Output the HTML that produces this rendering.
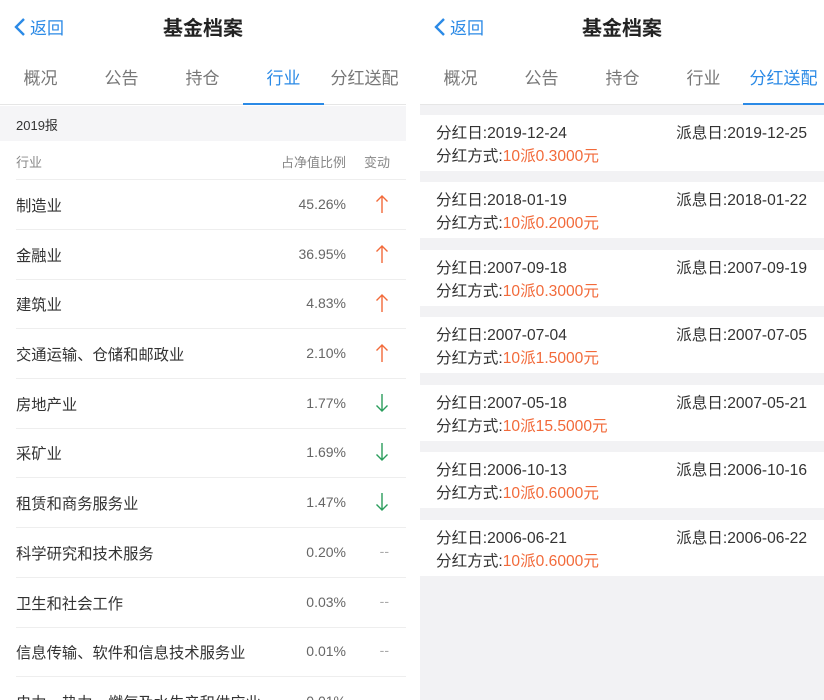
<!DOCTYPE html><html><head><meta charset="utf-8"><style>
*{margin:0;padding:0;box-sizing:border-box}
body{width:824px;height:700px;overflow:hidden;background:#fff;font-family:"Liberation Sans","Noto Sans CJK SC",sans-serif;position:relative}
.p{position:absolute;top:0;height:700px;overflow:hidden}
.L{left:0;width:406px}
.R{left:420px;width:404px;background:#f2f2f4}
.hd{position:absolute;top:0;left:0;right:0;height:50px;background:#fff}
.back{position:absolute;left:14px;top:14px;color:#2b8ae6;font-size:17px;display:flex;align-items:center}
.back svg{margin-right:4px}
.title{position:absolute;left:0;right:0;top:12px;text-align:center;font-size:20px;font-weight:bold;color:#222}
.tabs{position:absolute;top:50px;left:0;right:0;height:55px;background:#fff;border-bottom:1px solid #e6e6e6}
.tab{position:absolute;top:14px;font-size:17px;color:#777;width:81px;text-align:center}
.tab.on{color:#2b8ae6}
.ul{position:absolute;bottom:-1px;height:2px;background:#2b8ae6;width:81px}
.row{position:absolute;left:16px;right:0;height:50px;border-bottom:1px solid #eee;font-size:15.3px;color:#333}
.row .n{position:absolute;left:0;top:14px}
.row .v{position:absolute;right:60px;top:16px;font-size:14px;color:#666}
.row .a{position:absolute;right:17px;top:14px}
.dd{position:absolute;right:17px;top:15px;color:#aaa;font-size:14px}
.card{position:absolute;left:0;right:0;height:56px;background:#fff;font-size:15.6px;color:#333}
.card .a1{position:absolute;left:16px;top:6px}
.card .a2{position:absolute;right:17px;top:6px}
.card .a3{position:absolute;left:16px;top:29px}
.o{color:#f26a3a}
</style></head><body>
<svg width="0" height="0" style="position:absolute"><defs>
<symbol id="u" viewBox="0 0 14 20"><path d="M7 19V2M1.5 7.5L7 2l5.5 5.5" fill="none" stroke="#f26a3a" stroke-width="1.4"/></symbol>
<symbol id="d" viewBox="0 0 14 20"><path d="M7 1v17M1.5 12.5L7 18l5.5-5.5" fill="none" stroke="#2a9d5c" stroke-width="1.4"/></symbol>
</defs></svg>
<div class="p L">
<div class="hd"><div class="back"><svg width="12" height="20" viewBox="0 0 12 20"><path d="M10 2L2 10l8 8" fill="none" stroke="#2b8ae6" stroke-width="2.4"/></svg>返回</div><div class="title">基金档案</div></div>
<div class="tabs"><div class="tab" style="left:0">概况</div><div class="tab" style="left:81px">公告</div><div class="tab" style="left:162px">持仓</div><div class="tab on" style="left:243px">行业</div><div class="tab" style="left:324px">分红送配</div><div class="ul" style="left:243px"></div></div>
<div style="position:absolute;top:106px;left:0;right:0;height:35px;background:#f5f5f7;font-size:13px;color:#333;padding:9px 16px">2019报</div>
<div class="row" style="top:141px;height:39px;font-size:13px;color:#888"><span style="position:absolute;top:11px">行业</span><span style="position:absolute;right:60px;top:11px">占净值比例</span><span style="position:absolute;right:16px;top:11px">变动</span></div>
<div class="row" style="top:180px"><span class="n">制造业</span><span class="v">45.26%</span><svg class="a" width="14" height="20"><use href="#u"/></svg></div>
<div class="row" style="top:230px"><span class="n">金融业</span><span class="v">36.95%</span><svg class="a" width="14" height="20"><use href="#u"/></svg></div>
<div class="row" style="top:279px"><span class="n">建筑业</span><span class="v">4.83%</span><svg class="a" width="14" height="20"><use href="#u"/></svg></div>
<div class="row" style="top:329px"><span class="n">交通运输、仓储和邮政业</span><span class="v">2.10%</span><svg class="a" width="14" height="20"><use href="#u"/></svg></div>
<div class="row" style="top:379px"><span class="n">房地产业</span><span class="v">1.77%</span><svg class="a" width="14" height="20"><use href="#d"/></svg></div>
<div class="row" style="top:428px"><span class="n">采矿业</span><span class="v">1.69%</span><svg class="a" width="14" height="20"><use href="#d"/></svg></div>
<div class="row" style="top:478px"><span class="n">租赁和商务服务业</span><span class="v">1.47%</span><svg class="a" width="14" height="20"><use href="#d"/></svg></div>
<div class="row" style="top:528px"><span class="n">科学研究和技术服务</span><span class="v">0.20%</span><span class="dd">--</span></div>
<div class="row" style="top:578px"><span class="n">卫生和社会工作</span><span class="v">0.03%</span><span class="dd">--</span></div>
<div class="row" style="top:627px"><span class="n">信息传输、软件和信息技术服务业</span><span class="v">0.01%</span><span class="dd">--</span></div>
<div class="row" style="top:677px"><span class="n">电力、热力、燃气及水生产和供应业</span><span class="v">0.01%</span><span class="dd">--</span></div>
</div>
<div class="p R">
<div class="hd"><div class="back"><svg width="12" height="20" viewBox="0 0 12 20"><path d="M10 2L2 10l8 8" fill="none" stroke="#2b8ae6" stroke-width="2.4"/></svg>返回</div><div class="title">基金档案</div></div>
<div class="tabs"><div class="tab" style="left:0">概况</div><div class="tab" style="left:81px">公告</div><div class="tab" style="left:162px">持仓</div><div class="tab" style="left:243px">行业</div><div class="tab on" style="left:323px">分红送配</div><div class="ul" style="left:323px"></div></div>
<div class="card" style="top:115px"><span class="a1">分红日:2019-12-24</span><span class="a2">派息日:2019-12-25</span><span class="a3">分红方式:<span class="o">10派0.3000元</span></span></div>
<div class="card" style="top:182px"><span class="a1">分红日:2018-01-19</span><span class="a2">派息日:2018-01-22</span><span class="a3">分红方式:<span class="o">10派0.2000元</span></span></div>
<div class="card" style="top:250px"><span class="a1">分红日:2007-09-18</span><span class="a2">派息日:2007-09-19</span><span class="a3">分红方式:<span class="o">10派0.3000元</span></span></div>
<div class="card" style="top:317px"><span class="a1">分红日:2007-07-04</span><span class="a2">派息日:2007-07-05</span><span class="a3">分红方式:<span class="o">10派1.5000元</span></span></div>
<div class="card" style="top:385px"><span class="a1">分红日:2007-05-18</span><span class="a2">派息日:2007-05-21</span><span class="a3">分红方式:<span class="o">10派15.5000元</span></span></div>
<div class="card" style="top:452px"><span class="a1">分红日:2006-10-13</span><span class="a2">派息日:2006-10-16</span><span class="a3">分红方式:<span class="o">10派0.6000元</span></span></div>
<div class="card" style="top:520px"><span class="a1">分红日:2006-06-21</span><span class="a2">派息日:2006-06-22</span><span class="a3">分红方式:<span class="o">10派0.6000元</span></span></div>
</div>
</body></html>
